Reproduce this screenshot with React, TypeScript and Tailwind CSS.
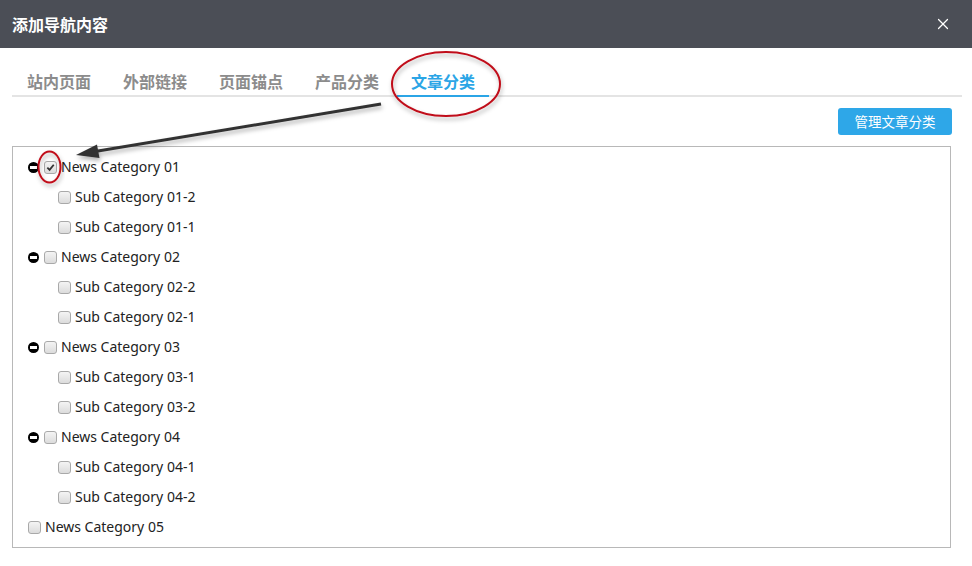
import { X } from "lucide-react";

const tabs = ["站内页面", "外部链接", "页面锚点", "产品分类", "文章分类"];

type Row = { label: string; level: 0 | 1; toggle?: boolean; checked?: boolean };

const rows: Row[] = [
  { label: "News Category 01", level: 0, toggle: true, checked: true },
  { label: "Sub Category 01-2", level: 1 },
  { label: "Sub Category 01-1", level: 1 },
  { label: "News Category 02", level: 0, toggle: true },
  { label: "Sub Category 02-2", level: 1 },
  { label: "Sub Category 02-1", level: 1 },
  { label: "News Category 03", level: 0, toggle: true },
  { label: "Sub Category 03-1", level: 1 },
  { label: "Sub Category 03-2", level: 1 },
  { label: "News Category 04", level: 0, toggle: true },
  { label: "Sub Category 04-1", level: 1 },
  { label: "Sub Category 04-2", level: 1 },
  { label: "News Category 05", level: 0 },
];

function Check({ checked }: { checked?: boolean }) {
  return (
    <span className="flex size-[13px] shrink-0 items-center justify-center rounded-[3px] border border-[#a9a9a9] bg-gradient-to-b from-[#f4f4f4] to-[#dcdcdc]">
      {checked ? (
        <svg viewBox="0 0 10 10" className="size-[9px]">
          <path d="M1.5 5.2 L4 7.6 L8.6 2" fill="none" stroke="#333" strokeWidth="2" />
        </svg>
      ) : null}
    </span>
  );
}

function Minus() {
  return (
    <span className="mr-[5px] flex size-[11px] shrink-0 items-center justify-center rounded-full bg-black">
      <span className="h-[3px] w-[7px] bg-white" />
    </span>
  );
}

export default function App() {
  return (
    <div className="relative h-[566px] w-[972px] overflow-hidden bg-white font-['Noto_Sans','Noto_Sans_CJK_SC',sans-serif]">
      <header className="flex h-12 items-center justify-between bg-[#4b4e56] pl-3 pr-[20px]">
        <h1 className="font-['Noto_Sans_CJK_SC',sans-serif] text-base font-bold text-white">
          添加导航内容
        </h1>
        <X className="size-[18px] text-white" strokeWidth={1.6} />
      </header>

      <div className="pl-3 pr-[10px]">
        <nav className="flex gap-1 border-b-2 border-[#e4e4e4] pl-px pt-[22px]">
          {tabs.map((t, i) => {
            const active = i === tabs.length - 1;
            return (
              <span
                key={t}
                className={
                  "-mb-[2px] border-b-2 px-[14px] pb-[3px] font-['Noto_Sans_CJK_SC',sans-serif] text-base leading-[22px] font-bold " +
                  (active ? "border-[#2ba5e6] text-[#2ba5e6]" : "border-transparent text-[#8c8c8c]")
                }
              >
                {t}
              </span>
            );
          })}
        </nav>
      </div>

      <div className="pl-3 pr-[21px]">
        <div className="flex justify-end pt-[11px]">
          <button
            type="button"
            className="mr-[-1px] h-[27px] w-[114px] rounded-[3px] bg-[#2ea7e8] font-['Noto_Sans_CJK_SC',sans-serif] text-[13.5px] text-white"
          >
            管理文章分类
          </button>
        </div>

        <div className="mt-[11px] border border-[#b8b8b8] py-[5px] pl-[15px]">
          {rows.map((r) => (
            <div
              key={r.label}
              className={
                "flex h-[30px] items-center text-sm text-[#222] " + (r.level === 1 ? "pl-[30px]" : "")
              }
            >
              {r.toggle ? <Minus /> : null}
              <Check checked={r.checked} />
              <span className="ml-1">{r.label}</span>
            </div>
          ))}
        </div>
      </div>

      <svg className="pointer-events-none absolute inset-0" width="972" height="566">
        <defs>
          <filter id="sh" x="-20%" y="-20%" width="140%" height="160%">
            <feDropShadow dx="1" dy="3" stdDeviation="2" floodColor="#000" floodOpacity="0.3" />
          </filter>
        </defs>
        <ellipse cx="446" cy="84" rx="54" ry="32" fill="none" stroke="#c0101a" strokeWidth="2" filter="url(#sh)" />
        <ellipse cx="49.5" cy="167" rx="11" ry="15.5" fill="none" stroke="#c0101a" strokeWidth="2" filter="url(#sh)" />
        <g filter="url(#sh)">
          <line x1="381" y1="104" x2="95" y2="151.5" stroke="#333" strokeWidth="3" />
          <path d="M76 155 L97 144.5 L99.5 158 Z" fill="#333" />
        </g>
      </svg>
    </div>
  );
}
